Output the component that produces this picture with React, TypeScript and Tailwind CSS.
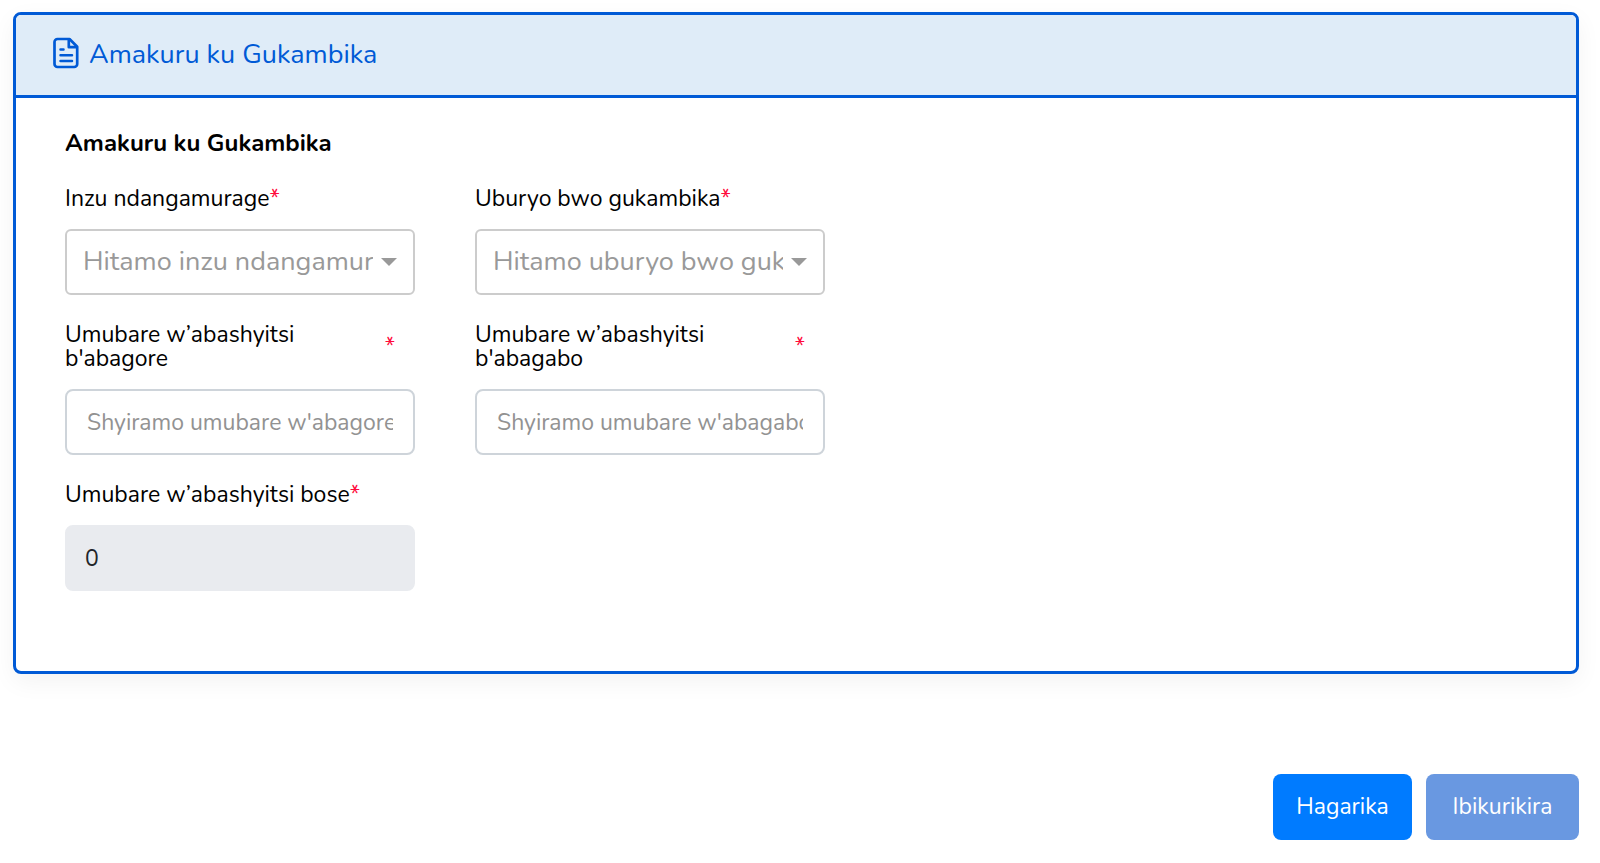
import { useState, type ReactNode } from 'react';

const controlClass =
  'block h-[66px] w-full rounded-lg border-2 text-[23px] outline-none focus:border-[#005ad6]';

function FileIcon() {
  return (
    <svg viewBox="0 0 26 32" className="mb-1 h-8 w-[26px]" fill="none" stroke="currentColor" strokeWidth="2.7" strokeLinejoin="round" aria-hidden="true">
      <path d="M4.5 2H16.5L24.2 9.8V27a3 3 0 0 1-3 3H4.5a3 3 0 0 1-3-3V5a3 3 0 0 1 3-3Z" />
      <path d="M15.8 2.5V10.2H23.8" />
      <path d="M7.5 12.5H10.5M7.5 18.2H19M7.5 24H19" strokeLinecap="round" strokeWidth="2.5" />
    </svg>
  );
}

function Field({ id, label, children }: { id: string; label: string; children: ReactNode }) {
  return (
    <div>
      <label htmlFor={id} className="mr-5 flex items-center text-[23px] leading-6 text-black">
        <span>{label}</span>
        <span className="text-[#ff0a3c]">*</span>
      </label>
      <div className="relative mt-[18px]">{children}</div>
    </div>
  );
}

function SelectField({ id, label, placeholder }: { id: string; label: string; placeholder: string }) {
  return (
    <Field id={id} label={label}>
      <select
        id={id}
        defaultValue=""
        className="block h-[66px] w-full appearance-none rounded-md border-2 border-[#cccccc] bg-white pr-10 pl-4 text-[27px] text-[#999999] outline-none focus:border-[#005ad6]"
      >
        <option value="">{placeholder}</option>
      </select>
      <svg viewBox="0 0 16 8" className="pointer-events-none absolute top-[29px] right-[18px] h-2 w-4" fill="#999999" aria-hidden="true">
        <path d="M0 0H16L8 8Z" />
      </svg>
    </Field>
  );
}

export default function App() {
  const [women, setWomen] = useState('');
  const [men, setMen] = useState('');
  const total = Number(women || 0) + Number(men || 0);

  return (
    <main className="min-h-screen bg-white pt-3 pr-[21px] pb-5 pl-[13px] font-['Nunito','Lato',sans-serif]">
      <section className="overflow-hidden rounded-lg border-3 border-[#005ad6] bg-white shadow-[0_8px_24px_rgba(0,0,0,0.05)]">
        <header className="flex h-[83px] items-center gap-[10px] border-b-3 border-[#005ad6] bg-[#dfecf8] pl-[37px] text-[#005ad6]">
          <FileIcon />
          <h1 className="text-[27px] leading-8">Amakuru ku Gukambika</h1>
        </header>
        <form className="px-[49px] pt-[29px] pb-20">
          <h2 className="text-[24px] leading-8 font-bold text-black">Amakuru ku Gukambika</h2>
          <div className="mt-7 grid max-w-[760px] grid-cols-2 gap-x-[60px] gap-y-7">
            <SelectField id="museum" label="Inzu ndangamurage" placeholder="Hitamo inzu ndangamurage" />
            <SelectField id="camping" label="Uburyo bwo gukambika" placeholder="Hitamo uburyo bwo gukambika" />
            <Field id="women" label="Umubare w’abashyitsi b'abagore">
              <input id="women" inputMode="numeric" value={women} onChange={(e) => setWomen(e.target.value.replace(/\D/g, ''))} placeholder="Shyiramo umubare w'abagore" className={`${controlClass} border-[#ced4da] bg-white px-5 placeholder:text-[#929292]`} />
            </Field>
            <Field id="men" label="Umubare w’abashyitsi b'abagabo">
              <input id="men" inputMode="numeric" value={men} onChange={(e) => setMen(e.target.value.replace(/\D/g, ''))} placeholder="Shyiramo umubare w'abagabo" className={`${controlClass} border-[#ced4da] bg-white px-5 placeholder:text-[#929292]`} />
            </Field>
            <Field id="total" label="Umubare w’abashyitsi bose">
              <input id="total" readOnly value={total} className={`${controlClass} border-[#e9ebef] bg-[#e9ebef] px-[18px] text-[#212529]`} />
            </Field>
          </div>
        </form>
      </section>
      <div className="mt-[100px] flex justify-end gap-[14px] text-[23px] text-white">
        <button type="button" className="h-[66px] min-w-[139px] rounded-lg bg-[#007bff] px-5">Hagarika</button>
        <button type="button" className="h-[66px] min-w-[153px] rounded-lg bg-[#6998e1] px-5">Ibikurikira</button>
      </div>
    </main>
  );
}
